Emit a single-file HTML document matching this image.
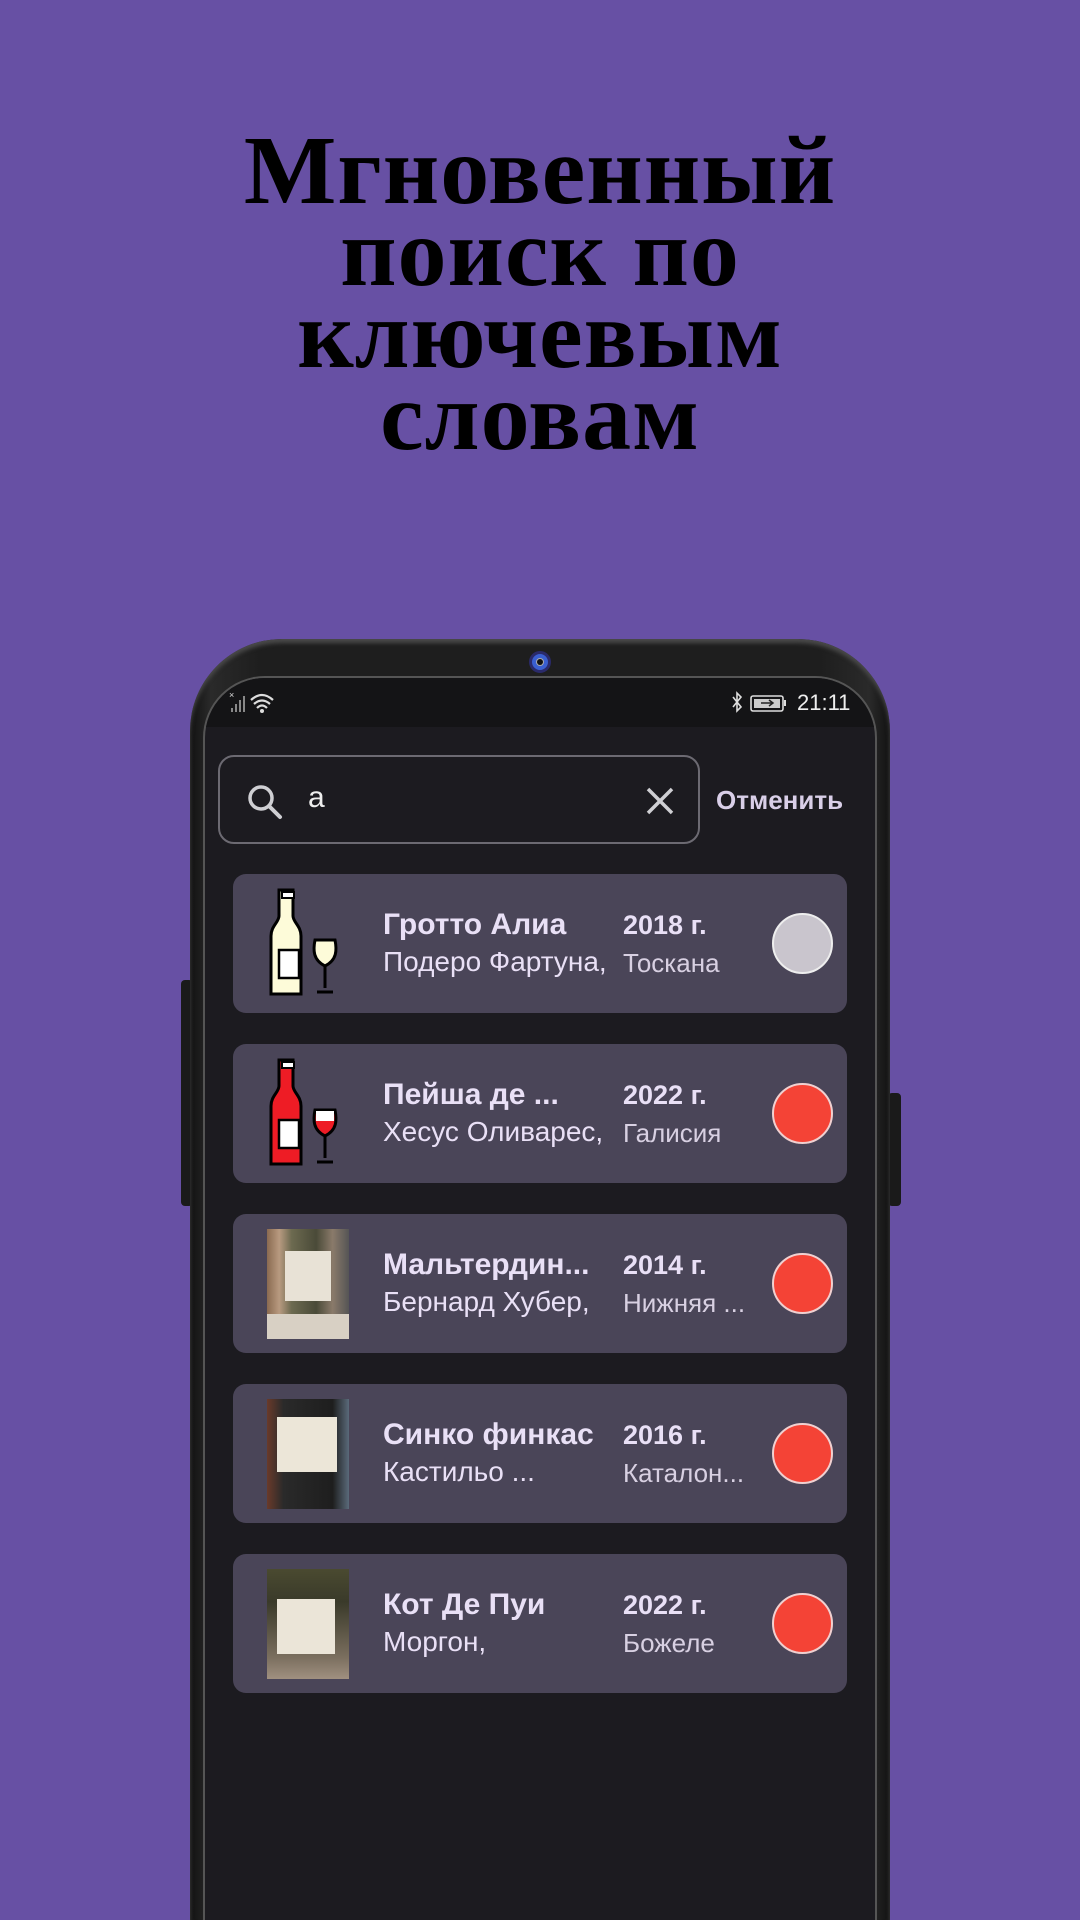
<!DOCTYPE html>
<html><head><meta charset="utf-8">
<style>
*{margin:0;padding:0;box-sizing:border-box}
html{width:1080px;height:1920px;overflow:hidden}
body{width:1080px;height:1920px;background:#6750a4;position:relative;overflow:hidden;font-family:"Liberation Sans",sans-serif}
.title{position:absolute;left:0;top:130px;width:1080px;text-align:center;font-family:"Liberation Serif",serif;font-weight:bold;font-size:98px;line-height:82px;color:#000;letter-spacing:1px}
.btn{position:absolute;background:#1a1a1a;border-radius:4px}
.phone{position:absolute;left:190px;top:639px;width:700px;height:1281px;border-radius:92px 92px 0 0;background:linear-gradient(90deg,#111 0%,#2a2a2a 3%,#1e1e1e 10%,#1e1e1e 90%,#2a2a2a 97%,#111 100%);box-shadow:inset 0 4px 4px #4a4a4a}
.screen{position:absolute;left:203px;top:676px;width:674px;height:1244px;border-radius:62px 62px 0 0;background:#1c1b20;border:2px solid #555;border-bottom:none;overflow:hidden}
.status{position:absolute;left:0;top:0;width:100%;height:49px;background:#141416}
.cam{position:absolute;left:529px;top:651px;width:22px;height:22px;border-radius:50%;background:#3a5fd0;border:3px solid #2a2a6a}
.cam:after{content:"";position:absolute;left:5px;top:5px;width:6px;height:6px;border-radius:50%;background:#111;box-shadow:0 0 0 1px #aaa}
.search{position:absolute;left:218px;top:755px;width:482px;height:89px;border:2px solid #6c6a72;border-radius:16px}
.cancel{position:absolute;left:716px;top:785px;font-size:26px;font-weight:bold;color:#d9cfe8}
.card{position:absolute;left:233px;width:614px;height:139px;background:#4a4558;border-radius:13px}
.thumb{position:absolute;left:34px;top:15px;width:82px;height:110px}
.t1{position:absolute;left:150px;top:34px;font-size:30px;font-weight:bold;color:#e9e0f6;white-space:nowrap}
.t2{position:absolute;left:150px;top:72px;font-size:28px;color:#e9e0f6;white-space:nowrap}
.y1{position:absolute;left:390px;top:36px;font-size:27px;font-weight:bold;color:#e9e0f6}
.y2{position:absolute;left:390px;top:74px;font-size:26px;color:#d8d0e2;white-space:nowrap}
.dot{position:absolute;left:539px;top:39px;width:61px;height:61px;border-radius:50%;background:#f44336;border:2px solid #f0d0d0}
.dot.g{background:#c9c5cd;border-color:#eee}
</style></head><body>
<div class="title">Мгновенный<br>поиск по<br>ключевым<br>словам</div>
<div class="btn" style="left:181px;top:980px;width:12px;height:226px"></div>
<div class="btn" style="left:888px;top:1093px;width:13px;height:113px"></div>
<div class="phone"></div>
<div class="screen">
 <div class="status">
  <svg style="position:absolute;left:24px;top:12px" width="60" height="26" viewBox="0 0 60 26"><text x="0" y="8" font-size="9" fill="#ddd" font-family="Liberation Sans">×</text><rect x="2" y="18" width="2" height="4" fill="#888"/><rect x="6" y="14" width="2" height="8" fill="#888"/><rect x="10" y="10" width="2" height="12" fill="#888"/><rect x="14" y="6" width="2" height="16" fill="#888"/><path d="M22 10 Q33 0 44 10 M25 14 Q33 7 41 14 M28 18 Q33 13 38 18" stroke="#ddd" stroke-width="2.2" fill="none"/><circle cx="33" cy="21" r="2" fill="#ddd"/></svg>
  <svg style="position:absolute;left:524px;top:12px" width="70" height="26" viewBox="0 0 70 26"><path d="M4 7 L12 17 L8 21 L8 3 L12 7 L4 17" stroke="#ddd" stroke-width="1.6" fill="none"/><rect x="22" y="6" width="32" height="15" rx="2" stroke="#ddd" stroke-width="1.6" fill="none"/><rect x="25" y="9" width="26" height="9" fill="#ccc"/><path d="M32 13 L44 13 M40 10 L44 13 L40 16" stroke="#222" stroke-width="1.5" fill="none"/><rect x="55" y="10" width="2" height="6" fill="#ddd"/></svg>
  <div style="position:absolute;left:592px;top:12px;font-size:22px;color:#eee">21:11</div>
 </div>
</div>
<div class="cam"></div>
<div class="search">
 <svg style="position:absolute;left:26px;top:26px" width="40" height="40" viewBox="0 0 40 40"><circle cx="15" cy="15" r="11" stroke="#cfcfd3" stroke-width="3.5" fill="none"/><path d="M23 23 L34 34" stroke="#cfcfd3" stroke-width="4" stroke-linecap="round"/></svg>
 <div style="position:absolute;left:88px;top:24px;font-size:30px;color:#eee">a</div>
 <svg style="position:absolute;left:424px;top:28px" width="32" height="32" viewBox="0 0 32 32"><path d="M4 4 L28 28 M28 4 L4 28" stroke="#cfcfd3" stroke-width="3.5"/></svg>
</div>
<div class="cancel">Отменить</div>

<div class="card" style="top:874px">
 <svg class="thumb" viewBox="0 0 82 110" style="left:34px;top:14px"><path d="M16 2h10v26c0 6 8 10 8 20v58H4V48c0-10 8-14 8-20V2z" fill="#fdfbd9" stroke="#000" stroke-width="3"/><rect x="15" y="4" width="12" height="6" fill="#fff" stroke="#000" stroke-width="2"/><rect x="12" y="62" width="20" height="28" fill="#fff" stroke="#000" stroke-width="2.5"/><path d="M48 52h20c2 10 2 20-10 26c-12-6-12-16-10-26z" fill="#fdfbd9" stroke="#000" stroke-width="3"/><path d="M58 78v22M50 104h16" stroke="#000" stroke-width="3"/></svg>
 <div class="t1">Гротто Алиа</div><div class="t2">Подеро Фартуна,</div>
 <div class="y1">2018 г.</div><div class="y2">Тоскана</div><div class="dot g"></div>
</div>
<div class="card" style="top:1044px">
 <svg class="thumb" viewBox="0 0 82 110" style="left:34px;top:14px"><path d="M16 2h10v26c0 6 8 10 8 20v58H4V48c0-10 8-14 8-20V2z" fill="#ee1c25" stroke="#000" stroke-width="3"/><rect x="15" y="4" width="12" height="6" fill="#fff" stroke="#000" stroke-width="2"/><rect x="12" y="62" width="20" height="28" fill="#fff" stroke="#000" stroke-width="2.5"/><path d="M48 52h20c2 10 2 20-10 26c-12-6-12-16-10-26z" fill="#ee1c25" stroke="#000" stroke-width="3"/><path d="M49 53h18v10h-18z" fill="#fff"/><path d="M58 78v22M50 104h16" stroke="#000" stroke-width="3"/></svg>
 <div class="t1">Пейша де ...</div><div class="t2">Хесус Оливарес,</div>
 <div class="y1">2022 г.</div><div class="y2">Галисия</div><div class="dot"></div>
</div>
<div class="card" style="top:1214px">
 <div class="thumb" style="background:linear-gradient(90deg,#8a6a50 0%,#b89a80 15%,#6c6a50 30%,#4a4a38 60%,#8a7a6a 80%,#555 100%)"><div style="position:absolute;left:18px;top:22px;width:46px;height:50px;background:#e8e2d6"></div><div style="position:absolute;left:0;top:85px;width:82px;height:25px;background:#d8d0c4"></div></div>
 <div class="t1">Мальтердин...</div><div class="t2">Бернард Хубер,</div>
 <div class="y1">2014 г.</div><div class="y2">Нижняя ...</div><div class="dot"></div>
</div>
<div class="card" style="top:1384px">
 <div class="thumb" style="background:linear-gradient(90deg,#6a3a2a 0%,#2a2a2a 20%,#1e1e1e 80%,#5a6a7a 100%)"><div style="position:absolute;left:10px;top:18px;width:60px;height:55px;background:#ece6d8"></div></div>
 <div class="t1">Синко финкас</div><div class="t2">Кастильо ...</div>
 <div class="y1">2016 г.</div><div class="y2">Каталон...</div><div class="dot"></div>
</div>
<div class="card" style="top:1554px">
 <div class="thumb" style="background:linear-gradient(180deg,#4a4a30 0%,#3a3a2a 30%,#7a6e5e 80%,#a09080 100%)"><div style="position:absolute;left:10px;top:30px;width:58px;height:55px;background:#ebe5d8"></div></div>
 <div class="t1">Кот Де Пуи</div><div class="t2">Моргон,</div>
 <div class="y1">2022 г.</div><div class="y2">Божеле</div><div class="dot"></div>
</div>
</body></html>
